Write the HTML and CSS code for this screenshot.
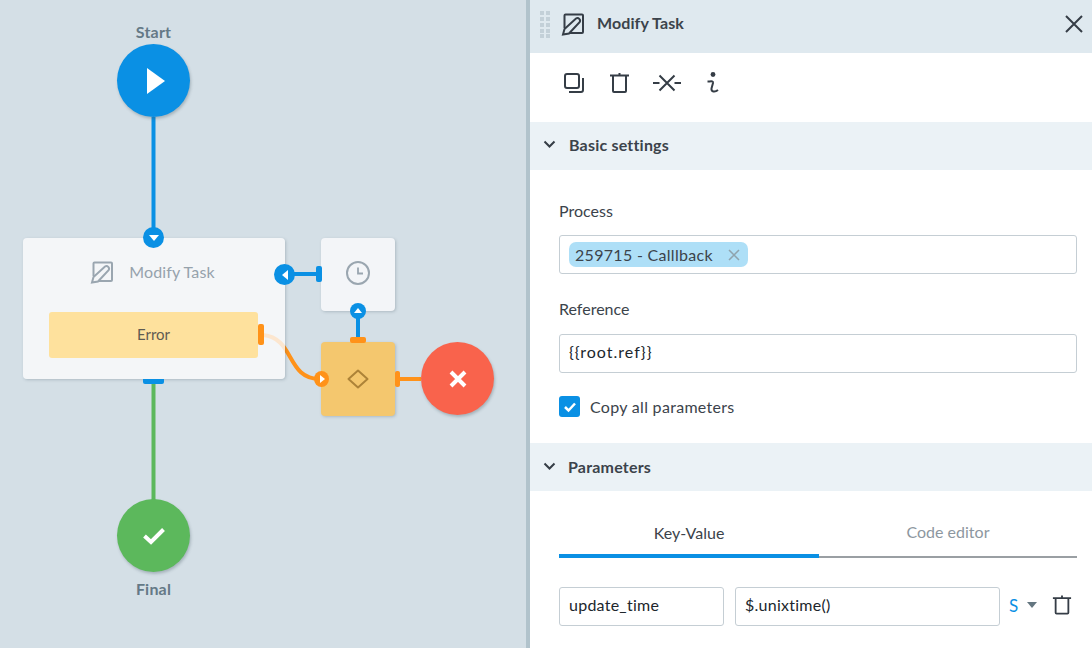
FILE: index.html
```html
<!DOCTYPE html>
<html lang="en">
<head>
<meta charset="utf-8">
<title>Modify Task</title>
<link rel="stylesheet" href="styles.css">
</head>
<body>
<div class="app">
  <main class="canvas">
    <svg class="wires" width="526" height="648" viewBox="0 0 526 648" fill="none">
      <path d="M153.5 117V237" stroke="#0a90e4" stroke-width="4"/>
      <path d="M153.500 384V500" stroke="#5cb85c" stroke-width="4"/>
      <path d="M263 335C295 338 286 379 320 379" stroke="#ff9219" stroke-width="4"/>
      <path d="M400 379H421" stroke="#ff9219" stroke-width="4"/>
    </svg>

    <div class="label label-start">Start</div>
    <div class="event event-start">
      <svg width="20" height="26" viewBox="0 0 20 26"><path d="M1 0L19 13L1 26Z" fill="#fff"/></svg>
    </div>

    <section class="node node-task">
      <div class="node-title">
        <svg width="24" height="24" viewBox="0 0 24 24" fill="none" stroke="#9aa6b0" stroke-width="2"><path d="M3.500 16V3.500a1 1 0 0 1 1-1H21a1 1 0 0 1 1 1V20a1 1 0 0 1-1 1H8"/><path d="M2 22.500L3.500 17L15 6.500a2.600 2.600 0 0 1 3.600 3.600L8 21.500Z"/></svg>
        <span>Modify Task</span>
      </div>
      <div class="error-row">Error</div>
    </section>
    <span class="handle handle-error"></span>
    <span class="tab-bottom"></span>

    <div class="node node-timer">
      <svg width="24" height="24" viewBox="0 0 24 24" fill="none" stroke="#9aa6b0"><circle cx="12" cy="12" r="11" stroke-width="2"/><path d="M12 6.500V12.500H17" stroke-width="1.800"/></svg>
    </div>

    <div class="node node-gate">
      <svg width="22" height="20" viewBox="0 0 22 20" fill="none"><path d="M11 1.500L20.500 10L11 18.500L1.500 10Z" stroke="#ad8338" stroke-width="2" stroke-linejoin="round"/></svg>
    </div>

    <span class="wire-h"></span>
    <span class="wire-v"></span>
    <span class="handle handle-timer"></span>
    <span class="handle handle-gate-top"></span>
    <span class="handle handle-gate-right"></span>

    <span class="port port-task-top"><svg width="10" height="8" viewBox="0 0 10 8"><path d="M0 1H10L5 7Z" fill="#fff"/></svg></span>
    <span class="port port-task-right"><svg width="8" height="10" viewBox="0 0 8 10"><path d="M7 0V10L1 5Z" fill="#fff"/></svg></span>
    <span class="port port-timer"><svg width="8" height="6" viewBox="0 0 8 6"><path d="M0 5H8L4 0Z" fill="#fff"/></svg></span>
    <span class="port port-gate"><svg width="6" height="8" viewBox="0 0 6 8"><path d="M1 0V8L6 4Z" fill="#fff"/></svg></span>

    <div class="event event-cancel">
      <svg width="20" height="20" viewBox="0 0 20 20"><path d="M3 3L17 17M17 3L3 17" stroke="#fff" stroke-width="4"/></svg>
    </div>
    <div class="event event-final">
      <svg width="24" height="20" viewBox="0 0 24 20" fill="none"><path d="M2.500 10L9 16L21.500 3.500" stroke="#fff" stroke-width="4"/></svg>
    </div>
    <div class="label label-final">Final</div>
  </main>

  <aside class="panel">
    <header class="panel-head">
      <svg class="grip" width="11" height="27" viewBox="0 0 11 27" fill="#c3d0d8"><rect x="0" y="0" width="4" height="4"/><rect x="6" y="0" width="4" height="4"/><rect x="0" y="6" width="4" height="4"/><rect x="6" y="6" width="4" height="4"/><rect x="0" y="12" width="4" height="4"/><rect x="6" y="12" width="4" height="4"/><rect x="0" y="18" width="4" height="4"/><rect x="6" y="18" width="4" height="4"/><rect x="0" y="23" width="4" height="4"/><rect x="6" y="23" width="4" height="4"/></svg>
      <svg width="24" height="24" viewBox="0 0 24 24" fill="none" stroke="#353d46" stroke-width="2"><path d="M3.500 16V3.500a1 1 0 0 1 1-1H21a1 1 0 0 1 1 1V20a1 1 0 0 1-1 1H8"/><path d="M2 22.500L3.500 17L15 6.500a2.600 2.600 0 0 1 3.600 3.600L8 21.500Z"/></svg>
      <h1 class="panel-title">Modify Task</h1>
      <svg class="close" width="18" height="18" viewBox="0 0 18 18" fill="none" stroke="#353d46" stroke-width="2"><path d="M1 1L17 17M17 1L1 17"/></svg>
    </header>

    <div class="toolbar">
      <svg width="22" height="22" viewBox="0 0 22 22" fill="none" stroke="#353d46" stroke-width="2"><rect x="2" y="2" width="14" height="14" rx="2"/><path d="M20 6V18a2 2 0 0 1-2 2H6"/></svg>
      <svg width="22" height="22" viewBox="0 0 22 22" fill="none" stroke="#353d46" stroke-width="2"><path d="M2 3.500H21M5 3.500V19a1 1 0 0 0 1 1H17a1 1 0 0 0 1-1V3.500M11.500 1V3"/></svg>
      <svg width="28" height="22" viewBox="0 0 28 22" fill="none" stroke="#353d46" stroke-width="2"><path d="M0 11H6.500M21.500 11H28M6.500 3.500L21.500 18.500M21.500 3.500L6.500 18.500"/></svg>
      <svg width="16" height="22" viewBox="-2 0 16 22" fill="none" stroke="#353d46" stroke-width="2"><circle cx="7" cy="2.500" r="2.400" fill="#353d46" stroke="none"/><path d="M1.500 9.500C4.500 9.500 7.500 8.500 7 11L5.500 16.500C5 20 9 20.500 12 18"/></svg>
    </div>

    <div class="section-head section-head-first">
      <svg width="13" height="9" viewBox="0 0 13 9" fill="none" stroke="#353d46" stroke-width="2"><path d="M1.500 1.500L6.500 6.500L11.500 1.500"/></svg>
      <span>Basic settings</span>
    </div>

    <div class="section-body">
      <div class="field-label">Process</div>
      <div class="input input-tags"><span class="tag">259715 - Calllback <svg width="12" height="12" viewBox="0 0 12 12" fill="none" stroke="#8fa3ae" stroke-width="1.500"><path d="M1 1L11 11M11 1L1 11"/></svg></span></div>
      <div class="field-label field-label-next">Reference</div>
      <div class="input input-ref">{{root.ref}}</div>
      <div class="check-row">
        <span class="checkbox"><svg width="14" height="12" viewBox="0 0 14 12" fill="none" stroke="#fff" stroke-width="2.500"><path d="M2 6L5.500 9.500L12 2.500"/></svg></span>
        <span>Copy all parameters</span>
      </div>
    </div>

    <div class="section-head section-head-second">
      <svg width="13" height="9" viewBox="0 0 13 9" fill="none" stroke="#353d46" stroke-width="2"><path d="M1.500 1.500L6.500 6.500L11.500 1.500"/></svg>
      <span>Parameters</span>
    </div>

    <div class="params">
      <div class="tabs">
        <div class="tab tab-active">Key-Value</div>
        <div class="tab">Code editor</div>
      </div>
      <div class="param-row">
        <div class="input input-key">update_time</div>
        <div class="input input-value">$.unixtime()</div>
        <span class="type">S</span>
        <span class="caret"></span>
        <svg class="row-delete" width="20" height="22" viewBox="0 0 22 22" fill="none" stroke="#353d46" stroke-width="2"><path d="M1 3.500H21M4 3.500V19.500a1 1 0 0 0 1 1H17a1 1 0 0 0 1-1V3.500M11 .5V3"/></svg>
      </div>
    </div>
  </aside>
</div>
</body>
</html>
```

FILE: styles.css
```css
* { box-sizing: border-box; }
html, body { margin: 0; height: 100%; }
body {
  font-family: "Lato", "Noto Sans", sans-serif;
  font-size: 16px;
  color: #3b434b;
  overflow: hidden;
}
.app { display: flex; width: 1092px; height: 648px; }

/* Canvas: diagram nodes sit on a free canvas */
.canvas {
  position: relative;
  width: 526px;
  flex: none;
  background: #d4dfe6;
}
.wires { position: absolute; left: 0; top: 0; }
.label {
  position: absolute;
  left: 103px;
  width: 101px;
  text-align: center;
  font-weight: 700;
  font-size: 16px;
  line-height: 20px;
  letter-spacing: .2px;
  color: #647986;
}
.label-start { top: 22px; }
.label-final { top: 579px; }

.event {
  position: absolute;
  width: 73px;
  height: 73px;
  border-radius: 50%;
  display: flex;
  align-items: center;
  justify-content: center;
  box-shadow: 1px 2px 3px rgba(60, 80, 90, .3);
}
.event-start { left: 117px; top: 44px; background: #0a90e4; padding-left: 5px; }
.event-final { left: 117px; top: 499px; background: #5cb85c; }
.event-cancel { left: 421px; top: 342px; background: #f9634c; }

.node {
  position: absolute;
  border-radius: 4px;
  box-shadow: 1px 1px 3px rgba(60, 80, 90, .25);
  display: flex;
  align-items: center;
  justify-content: center;
}
.node-task {
  left: 23px;
  top: 238px;
  width: 262px;
  height: 141px;
  flex-direction: column;
  justify-content: flex-start;
  background: rgba(251, 251, 253, .8);
  padding: 0 27px 0 26px;
}
.node-title {
  display: flex;
  align-items: center;
  justify-content: center;
  gap: 15px;
  height: 74px;
  width: 100%;
  padding: 0 2px 7px 0;
  color: #96a2ac;
  font-size: 16px;
  letter-spacing: .1px;
}
.error-row {
  width: 209px;
  height: 46px;
  padding-bottom: 2px;
  background: #fee19d;
  border-radius: 3px;
  display: flex;
  align-items: center;
  justify-content: center;
  color: #5e5b52;
  font-size: 15px;
}
.node-timer { left: 321px; top: 238px; width: 74px; height: 73px; padding-bottom: 3px; background: #f3f5f8; }
.node-gate { left: 321px; top: 342px; width: 74px; height: 74px; background: #f4c76e; }

.handle { position: absolute; background: #ff9219; border-radius: 2px; }
.handle-error { left: 258px; top: 324px; width: 6px; height: 21px; }
.handle-timer { left: 316px; top: 266px; width: 6px; height: 16px; background: #0a90e4; }
.handle-gate-top { left: 350px; top: 337px; width: 16px; height: 6px; }
.handle-gate-right { left: 395px; top: 371px; width: 5px; height: 16px; }
.tab-bottom {
  position: absolute;
  left: 143px;
  top: 379px;
  width: 21px;
  height: 5px;
  background: #0a90e4;
  border-radius: 0 0 2px 2px;
}
.wire-h { position: absolute; left: 290px; top: 272px; width: 28px; height: 4px; background: #0a90e4; }
.wire-v { position: absolute; left: 356px; top: 315px; width: 4px; height: 23px; background: #0a90e4; }

.port {
  position: absolute;
  border-radius: 50%;
  background: #0a90e4;
  display: flex;
  align-items: center;
  justify-content: center;
}
.port-task-top { left: 143px; top: 227px; width: 21px; height: 21px; }
.port-task-right { left: 274px; top: 264px; width: 21px; height: 21px; }
.port-timer { left: 350px; top: 303px; width: 16px; height: 16px; }
.port-gate { left: 314px; top: 371px; width: 15px; height: 16px; background: #ff9219; }

/* Panel */
.panel {
  flex: 1;
  min-width: 0;
  background: #fff;
  border-left: 4px solid #b1c3cc;
  display: flex;
  flex-direction: column;
}
.panel-head {
  height: 53px;
  flex: none;
  background: #dfe9ef;
  display: flex;
  align-items: center;
  padding: 0 10px 5px;
}
.grip { margin-right: 10px; }
.panel-title { margin: 0 0 3px 12px; font-size: 16px; font-weight: 700; letter-spacing: .1px; color: #3b434b; flex: 1; }
.close { margin-right: -1px; }

.toolbar {
  height: 69px;
  flex: none;
  display: flex;
  align-items: center;
  gap: 23px;
  padding: 0 0 9px 33px;
}
.section-head {
  height: 48px;
  flex: none;
  background: #ebf2f6;
  display: flex;
  align-items: center;
  gap: 13px;
  padding-left: 13px;
  font-weight: 700;
  font-size: 16px;
  letter-spacing: .2px;
  color: #3b434b;
}
.section-head-first { padding-bottom: 4px; }
.section-head-second { padding-bottom: 2px; gap: 12px; }
.section-body { padding: 30px 15px 0 29px; height: 273px; flex: none; }
.field-label { line-height: 22px; font-size: 16px; color: #3b434b; margin-bottom: 13px; }
.field-label-next { margin-top: 24px; margin-bottom: 14px; }
.input {
  height: 39px;
  border: 1px solid #c5ced4;
  border-radius: 3px;
  background: #fff;
  display: flex;
  align-items: center;
  padding: 0 0 4px 9px;
  font-size: 16px;
  letter-spacing: .25px;
  color: #20262c;
}
.input-tags { padding-bottom: 0; }
.input-ref { letter-spacing: 1px; }
.tag {
  display: flex;
  align-items: center;
  gap: 15px;
  height: 25px;
  padding: 0 8px 0 6px;
  background: #aedff7;
  border-radius: 7px;
  color: #3b434b;
  letter-spacing: .3px;
}
.check-row { display: flex; align-items: center; gap: 10px; margin-top: 23px; height: 21px; letter-spacing: .3px; color: #3b434b; }
.checkbox {
  width: 21px;
  height: 21px;
  border-radius: 3px;
  background: #0a90e4;
  display: flex;
  align-items: center;
  justify-content: center;
}
.params { padding: 0 15px 0 29px; flex: 1; }
.tabs { display: flex; height: 67px; border-bottom: 2px solid #9a9fa3; }
.tab {
  flex: 1;
  display: flex;
  align-items: center;
  justify-content: center;
  padding-top: 16px;
  color: #8d979f;
  font-size: 16px;
}
.tab-active { flex: 0 0 260px; padding-top: 20px; color: #3b434b; border-bottom: 4px solid #0a90e4; margin-bottom: -2px; }
.param-row { display: flex; align-items: center; margin-top: 29px; }
.input-key { width: 165px; flex: none; }
.input-value { width: 265px; flex: none; margin-left: 11px; }
.type { margin: 0 0 3px 9px; color: #0a90e4; font-size: 17px; }
.caret {
  margin: 0 0 3px 9px;
  width: 0;
  height: 0;
  border-left: 5px solid transparent;
  border-right: 5px solid transparent;
  border-top: 6px solid #647680;
}
.row-delete { margin: 0 0 3px 15px; }
```
